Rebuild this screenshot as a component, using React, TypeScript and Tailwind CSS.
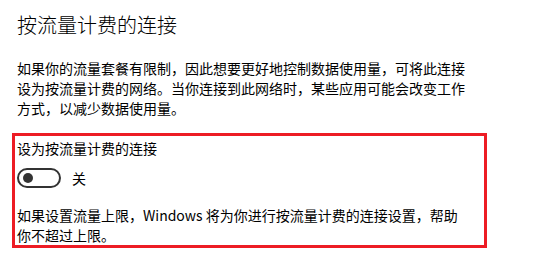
export default function App() {
  return (
    <div
      className="w-[537px] h-[258px] bg-white text-black pl-[17px] pt-[11px] overflow-hidden"
      style={{ fontFamily: '"Noto Sans CJK SC", "Noto Sans", sans-serif' }}
    >
      {/* Page title */}
      <h1 className="text-[20px] leading-[28px] font-light">按流量计费的连接</h1>

      <p className="mt-[19px] text-[14px] leading-[20px] whitespace-nowrap">
        如果你的流量套餐有限制，因此想要更好地控制数据使用量，可将此连接
        <br />
        设为按流量计费的网络。当你连接到此网络时，某些应用可能会改变工作
        <br />
        方式，以减少数据使用量。
      </p>

      {/* Highlighted setting block */}
      <div className="mt-[15px] -ml-[5px] w-[475px] border-[3px] border-[#ed1c24] pl-[2px] pt-[2px]">
        <div className="text-[14px] leading-[20px]">设为按流量计费的连接</div>

        <div className="mt-[10px] flex items-center">
          <div className="w-[44px] h-[20px] rounded-full border-2 border-[#333] flex items-center pl-[4px]">
            <div className="w-[10px] h-[10px] rounded-full bg-[#333]" />
          </div>
          <span className="ml-[11px] text-[14px] leading-[20px]">关</span>
        </div>

        <p className="mt-[17px] text-[14px] leading-[20px] whitespace-nowrap">
          如果设置流量上限，Windows 将为你进行按流量计费的连接设置，帮助
          <br />
          你不超过上限。
        </p>
      </div>
    </div>
  )
}
